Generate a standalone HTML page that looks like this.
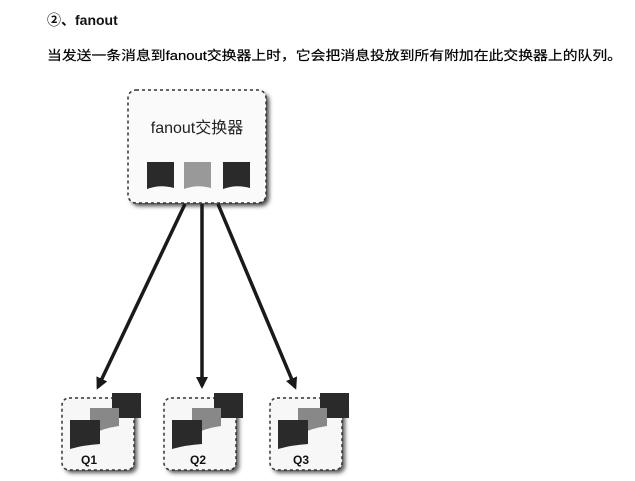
<!DOCTYPE html>
<html><head><meta charset="utf-8"><style>
html,body{margin:0;padding:0;background:#fff;width:635px;height:481px;overflow:hidden}
</style></head><body>
<svg width="635" height="481" xmlns="http://www.w3.org/2000/svg" style="position:absolute;left:0;top:0">
<defs>
<marker id="ah" markerWidth="12" markerHeight="12" refX="9" refY="6" orient="auto" markerUnits="userSpaceOnUse">
<path d="M0,0 L12,6 L0,12 Z" fill="#1a1a1a"/></marker>
<filter id="sh" x="-10%" y="-10%" width="130%" height="130%"><feGaussianBlur stdDeviation="2"/></filter>
</defs>
<text x="47" y="25" font-family="Liberation Sans, Noto Sans CJK SC, sans-serif" font-weight="bold" font-size="14" fill="#111">②、fanout</text>
<text x="47" y="60" font-family="Liberation Sans, Noto Sans CJK SC, sans-serif" font-size="13.3" fill="#000" stroke="#000" stroke-width="0.2" textLength="575" lengthAdjust="spacingAndGlyphs">当发送一条消息到fanout交换器上时，它会把消息投放到所有附加在此交换器上的队列。</text>
<rect x="131" y="93" width="138" height="113" rx="8" fill="#444" filter="url(#sh)"/>
<rect x="128" y="90" width="138" height="113" rx="8" fill="#fafafa" stroke="#333" stroke-width="1.5" stroke-dasharray="3,3"/>
<text x="197" y="133" text-anchor="middle" font-family="Liberation Sans, Noto Sans CJK SC, sans-serif" font-size="16" fill="#222">fanout交换器</text>
<path d="M147,162 H174 V188 Q160,184 147,189 Z" fill="#2a2a2a"/>
<path d="M184,162 H211 V188 Q197,184 184,189 Z" fill="#999"/>
<path d="M223,162 H250 V188 Q236,184 223,189 Z" fill="#2a2a2a"/>
<g stroke="#1a1a1a" stroke-width="3.5" marker-end="url(#ah)" fill="none">
<line x1="185" y1="204" x2="98" y2="387"/>
<line x1="202" y1="204" x2="202" y2="386"/>
<line x1="218" y1="204" x2="295" y2="387"/>
</g>
<g font-family="Liberation Sans, sans-serif" font-weight="bold" font-size="12" fill="#111" text-anchor="middle">
<g transform="translate(62,398)">
<rect x="3" y="3" width="72" height="72" rx="7" fill="#555" filter="url(#sh)"/>
<rect x="0" y="0" width="72" height="72" rx="7" fill="#f7f7f7" stroke="#333" stroke-width="1.5" stroke-dasharray="3,3"/>
<rect x="50" y="-5" width="29" height="25" fill="#2a2a2a"/>
<path d="M28,10 H57 V28 Q42,30 28,37 Z" fill="#888"/>
<path d="M8,22 H38 V46 Q22,47 8,51 Z" fill="#2a2a2a"/>
<text x="27" y="66">Q1</text>
</g>
<g transform="translate(164,398)">
<rect x="3" y="3" width="72" height="72" rx="7" fill="#555" filter="url(#sh)"/>
<rect x="0" y="0" width="72" height="72" rx="7" fill="#f7f7f7" stroke="#333" stroke-width="1.5" stroke-dasharray="3,3"/>
<rect x="50" y="-5" width="29" height="25" fill="#2a2a2a"/>
<path d="M28,10 H57 V28 Q42,30 28,37 Z" fill="#888"/>
<path d="M8,22 H38 V46 Q22,47 8,51 Z" fill="#2a2a2a"/>
<text x="34" y="66">Q2</text>
</g>
<g transform="translate(270,398)">
<rect x="3" y="3" width="72" height="72" rx="7" fill="#555" filter="url(#sh)"/>
<rect x="0" y="0" width="72" height="72" rx="7" fill="#f7f7f7" stroke="#333" stroke-width="1.5" stroke-dasharray="3,3"/>
<rect x="50" y="-5" width="29" height="25" fill="#2a2a2a"/>
<path d="M28,10 H57 V28 Q42,30 28,37 Z" fill="#888"/>
<path d="M8,22 H38 V46 Q22,47 8,51 Z" fill="#2a2a2a"/>
<text x="31" y="66">Q3</text>
</g>
</g>
</svg>
</body></html>
